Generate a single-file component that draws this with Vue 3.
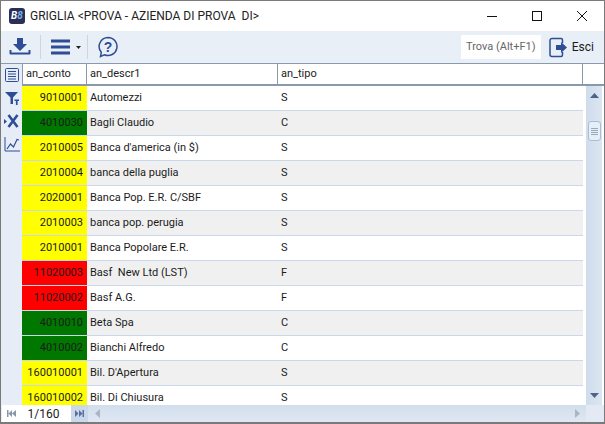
<template>
  <div class="window">
    <div class="titlebar">
      <div class="logo"><span>B</span><span class="logo-b">8</span></div>
      <div class="title">GRIGLIA &lt;PROVA - AZIENDA DI PROVA&nbsp; DI&gt;</div>
      <div class="controls">
        <svg width="12" height="12" viewBox="0 0 12 12"><path d="M1 6.500h10" stroke="#111" fill="none" /></svg>
        <svg width="12" height="12" viewBox="0 0 12 12"><rect x="1.500" y="1.500" width="9" height="9" stroke="#111" fill="none" /></svg>
        <svg width="12" height="12" viewBox="0 0 12 12"><path d="M1 1l10 10M11 1L1 11" stroke="#111" fill="none" /></svg>
      </div>
    </div>

    <div class="toolbar">
      <button class="tool first">
        <svg width="22" height="20" viewBox="0 0 22 20">
          <path d="M8 1h6v6h4l-7 7-7-7h4z" fill="#2f4d96" />
          <path d="M1.500 13v3.500h19V13" fill="none" stroke="#2f4d96" stroke-width="2" stroke-linejoin="round" />
        </svg>
      </button>
      <i class="sep"></i>
      <button class="tool menu">
        <svg width="20" height="16" viewBox="0 0 20 16">
          <path d="M0 2h19M0 8h19M0 14h19" stroke="#2f4d96" stroke-width="3" />
        </svg>
        <svg width="5" height="3" viewBox="0 0 5 3"><path d="M0 0h5L2.500 3z" fill="#222" /></svg>
      </button>
      <i class="sep short"></i>
      <button class="tool help">
        <svg width="22" height="22" viewBox="0 0 22 22">
          <path d="M11 1.500a9 9 0 1 1-3.600 17.250L3.500 20.500l.8-4.200A9 9 0 0 1 11 1.500z" fill="none" stroke="#2f4d96" stroke-width="1.500" />
          <text x="11" y="15.500" text-anchor="middle" class="qmark">?</text>
        </svg>
      </button>
      <div class="spacer"></div>
      <div class="search">Trova (Alt+F1)</div>
      <button class="exit">
        <svg width="19" height="21" viewBox="0 0 19 21">
          <path d="M12 1.500H3a2 2 0 0 0-2 2v14a2 2 0 0 0 2 2h9a1.500 1.500 0 0 0 1.500-1.500V15M13.500 6V3a1.500 1.500 0 0 0-1.500-1.500" fill="none" stroke="#2f4d96" stroke-width="1.500" />
          <path d="M7 8h5V5l6 5.500-6 5.500v-3H7z" fill="#2f4d96" />
        </svg>
        <span>Esci</span>
      </button>
    </div>

    <div class="main">
      <div class="rail">
        <svg width="16" height="16" viewBox="0 0 16 16">
          <rect x="1.500" y="1.500" width="13" height="13" rx="1" fill="none" stroke="#2f4d96" />
          <path d="M4 4.500h8M4 7h8M4 9.500h8M4 12h8" stroke="#2f4d96" />
        </svg>
        <svg width="16" height="16" viewBox="0 0 16 16">
          <path d="M1 2h13L9 7.500V14H6.500V7.500z" fill="#2f4d96" />
          <path d="M10.500 9.500h4.500v1.600h-1.400V15h-1.700v-3.900h-1.400z" fill="#2f4d96" />
        </svg>
        <svg width="16" height="16" viewBox="0 0 16 16">
          <path d="M4.500 2l9 12M13.500 2l-9 12" stroke="#2f4d96" stroke-width="2.600" />
          <path d="M0 6l3 2.500L0 11z" fill="#2f4d96" />
        </svg>
        <svg width="16" height="16" viewBox="0 0 16 16">
          <path d="M1 1v14h15" fill="none" stroke="#2f4d96" />
          <path d="M3 13l3.500-5 3 3L13 3.500l2 .5" fill="none" stroke="#2f4d96" stroke-width="1.200" />
        </svg>
      </div>

      <div class="grid">
        <div class="head">
          <div class="hc c1">an_conto</div>
          <div class="hc c2">an_descr1</div>
          <div class="hc c3">an_tipo</div>
          <div class="hc c4"></div>
        </div>

        <div class="body">
          <div class="rows">
            <div v-for="(r, i) in rows" :key="r.code + r.name" class="row" :class="{ alt: i % 2 === 1 }">
              <div class="cell c1 code" :class="r.color">{{ r.code }}</div>
              <div class="cell c2">{{ r.name }}</div>
              <div class="cell c3">{{ r.type }}</div>
            </div>
          </div>
          <div class="vscroll">
            <svg class="arrow" width="9" height="5" viewBox="0 0 9 5"><path d="M4.500 0L9 5H0z" fill="#4f6388" /></svg>
            <div class="thumb"><i></i><i></i><i></i><i></i></div>
            <svg class="arrow down" width="9" height="5" viewBox="0 0 9 5"><path d="M0 0h9L4.500 5z" fill="#4f6388" /></svg>
          </div>
        </div>

        <div class="foot">
          <div class="pager">
            <svg width="9" height="7" viewBox="0 0 9 7"><path d="M0 0h1.500v7H0zM5 0v7L1.500 3.500zM9 0v7L5 3.500z" fill="#8b97a8" /></svg>
            <span class="count">1/160</span>
            <span class="next">
              <svg width="9" height="7" viewBox="0 0 9 7"><path d="M0 0v7l3.500-3.500zM4 0v7l3.500-3.500zM7.500 0H9v7H7.500z" fill="#5a6f9c" /></svg>
            </span>
          </div>
          <div class="hscroll">
            <svg width="5" height="9" viewBox="0 0 5 9"><path d="M5 0v9L0 4.500z" fill="#aab6c8" /></svg>
            <svg width="5" height="9" viewBox="0 0 5 9"><path d="M0 0v9l5-4.500z" fill="#aab6c8" /></svg>
          </div>
          <div class="corner"></div>
        </div>
      </div>
    </div>
  </div>
</template>

<script setup>
const rows = [
  { code: '9010001', name: 'Automezzi', type: 'S', color: 'yellow' },
  { code: '4010030', name: 'Bagli Claudio', type: 'C', color: 'green' },
  { code: '2010005', name: "Banca d'america (in $)", type: 'S', color: 'yellow' },
  { code: '2010004', name: 'banca della puglia', type: 'S', color: 'yellow' },
  { code: '2020001', name: 'Banca Pop. E.R. C/SBF', type: 'S', color: 'yellow' },
  { code: '2010003', name: 'banca pop. perugia', type: 'S', color: 'yellow' },
  { code: '2010001', name: 'Banca Popolare E.R.', type: 'S', color: 'yellow' },
  { code: '11020003', name: 'Basf  New Ltd (LST)', type: 'F', color: 'red' },
  { code: '11020002', name: 'Basf A.G.', type: 'F', color: 'red' },
  { code: '4010010', name: 'Beta Spa', type: 'C', color: 'green' },
  { code: '4010002', name: 'Bianchi Alfredo', type: 'C', color: 'green' },
  { code: '160010001', name: "Bil. D'Apertura", type: 'S', color: 'yellow' },
  { code: '160010002', name: 'Bil. Di Chiusura', type: 'S', color: 'yellow' }
]
</script>

<style>
html, body {
  margin: 0;
  background: #fff;
}
</style>

<style scoped>
.window {
  width: 605px;
  height: 424px;
  box-sizing: border-box;
  border: 1px solid #7a7a7a;
  border-bottom-width: 2px;
  display: flex;
  flex-direction: column;
  overflow: hidden;
  font-family: Roboto, "Noto Sans", sans-serif;
  color: #1b1b1b;
  background: #fff;
}
svg {
  display: block;
  flex: none;
}
.titlebar {
  height: 30px;
  flex: none;
  display: flex;
  align-items: center;
  padding-left: 8px;
}
.logo {
  width: 16px;
  height: 16px;
  border-radius: 3px;
  background: #2b2f55;
  color: #fff;
  font-size: 10px;
  font-weight: 700;
  font-style: italic;
  line-height: 16px;
  text-align: center;
  margin-right: 5px;
}
.logo-b {
  color: #6fb1f0;
}
.title {
  font-size: 12px;
  color: #222;
  white-space: pre;
}
.controls {
  margin-left: auto;
  display: flex;
  gap: 33px;
  padding-right: 16px;
}
.toolbar {
  height: 33px;
  flex: none;
  display: flex;
  align-items: center;
  background: #e9eff7;
  border-bottom: 1px solid #8a99ac;
  box-sizing: border-box;
}
.tool {
  background: none;
  border: 0;
  padding: 0;
  display: flex;
  align-items: center;
  gap: 5px;
}
.tool.first {
  margin-left: 8px;
}
.tool.menu {
  margin-left: 10px;
}
.tool.help {
  margin-left: 9px;
}
.sep {
  width: 1px;
  height: 24px;
  background: #ccd5e2;
  margin-left: 9px;
}
.sep.short {
  margin-left: 6px;
}
.spacer {
  flex: 1;
}
.search {
  width: 80px;
  height: 24px;
  background: #fff;
  color: #666;
  font-size: 11px;
  line-height: 24px;
  text-align: center;
  margin-right: 8px;
}
.exit {
  background: none;
  border: 0;
  padding: 0;
  margin-right: 10px;
  display: flex;
  align-items: center;
  gap: 4px;
  font: inherit;
  font-size: 12px;
  color: #1b1b1b;
}
.main {
  flex: 1;
  display: flex;
  min-height: 0;
}
.rail {
  width: 21px;
  flex: none;
  background: #e6edf6;
  display: flex;
  flex-direction: column;
  align-items: center;
  gap: 7px;
  padding-top: 3px;
  box-sizing: border-box;
}
.grid {
  flex: 1;
  min-width: 0;
  display: flex;
  flex-direction: column;
}
.head {
  height: 22px;
  flex: none;
  display: flex;
  box-sizing: border-box;
  border-bottom: 2px solid #8a99ac;
  border-left: 1px solid #8a99ac;
}
.hc {
  font-size: 11px;
  line-height: 20px;
  padding-left: 3px;
  box-sizing: border-box;
  border-right: 1px solid #8a99ac;
  color: #222;
}
.hc.c1 {
  width: 64px;
}
.c1 {
  width: 65px;
  flex: none;
}
.c2 {
  width: 191px;
  flex: none;
}
.c3 {
  width: 305px;
  flex: none;
}
.c4 {
  flex: 1;
  border-right: 0;
}
.body {
  flex: 1;
  min-height: 0;
  display: flex;
}
.rows {
  flex: 1;
  min-width: 0;
  overflow: hidden;
}
.row {
  height: 25px;
  width: 561px;
  box-sizing: border-box;
  display: flex;
  border-bottom: 1px solid #c9d8ea;
  background: #fff;
}
.row.alt {
  background: #f0f0f0;
}
.cell {
  font-size: 11px;
  line-height: 24px;
  padding-left: 3px;
  box-sizing: border-box;
  white-space: pre;
}
.code {
  text-align: right;
  padding: 0 4px 0 0;
}
.yellow {
  background: #ffff00;
}
.green {
  background: #007800;
}
.red {
  background: #ff0000;
}
.vscroll {
  width: 16px;
  flex: none;
  background: linear-gradient(90deg, #cfdcec, #dce6f2);
  display: flex;
  flex-direction: column;
  align-items: center;
  padding: 7px 0;
  box-sizing: border-box;
  margin-right: 2px;
}
.arrow.down {
  margin-top: auto;
}
.thumb {
  width: 13px;
  height: 20px;
  margin-top: 23px;
  box-sizing: border-box;
  border: 1px solid #a9bdd6;
  border-radius: 3px;
  background: #e6eef7;
  display: flex;
  flex-direction: column;
  justify-content: center;
  gap: 1px;
  align-items: center;
}
.thumb i {
  width: 7px;
  height: 1px;
  background: #9aa8ba;
}
.foot {
  height: 17px;
  flex: none;
  display: flex;
  background: linear-gradient(180deg, #d2deec, #dfe8f3);
}
.pager {
  display: flex;
  align-items: center;
  background: #fff;
  margin-left: -20px;
  width: 86px;
  flex: none;
  padding-left: 5px;
  box-sizing: border-box;
  position: relative;
}
.count {
  width: 55px;
  text-align: center;
  font-size: 12px;
}
.next {
  height: 17px;
  width: 17px;
  flex: none;
  background: #c9d8ea;
  display: flex;
  align-items: center;
  justify-content: center;
}
.hscroll {
  flex: 1;
  display: flex;
  align-items: center;
  justify-content: space-between;
  padding: 0 6px 0 7px;
}
.corner {
  width: 18px;
  flex: none;
  background: #e3eaf4;
}
.qmark {
  font-size: 14px;
  font-weight: 700;
  fill: #2f4d96;
}
</style>
